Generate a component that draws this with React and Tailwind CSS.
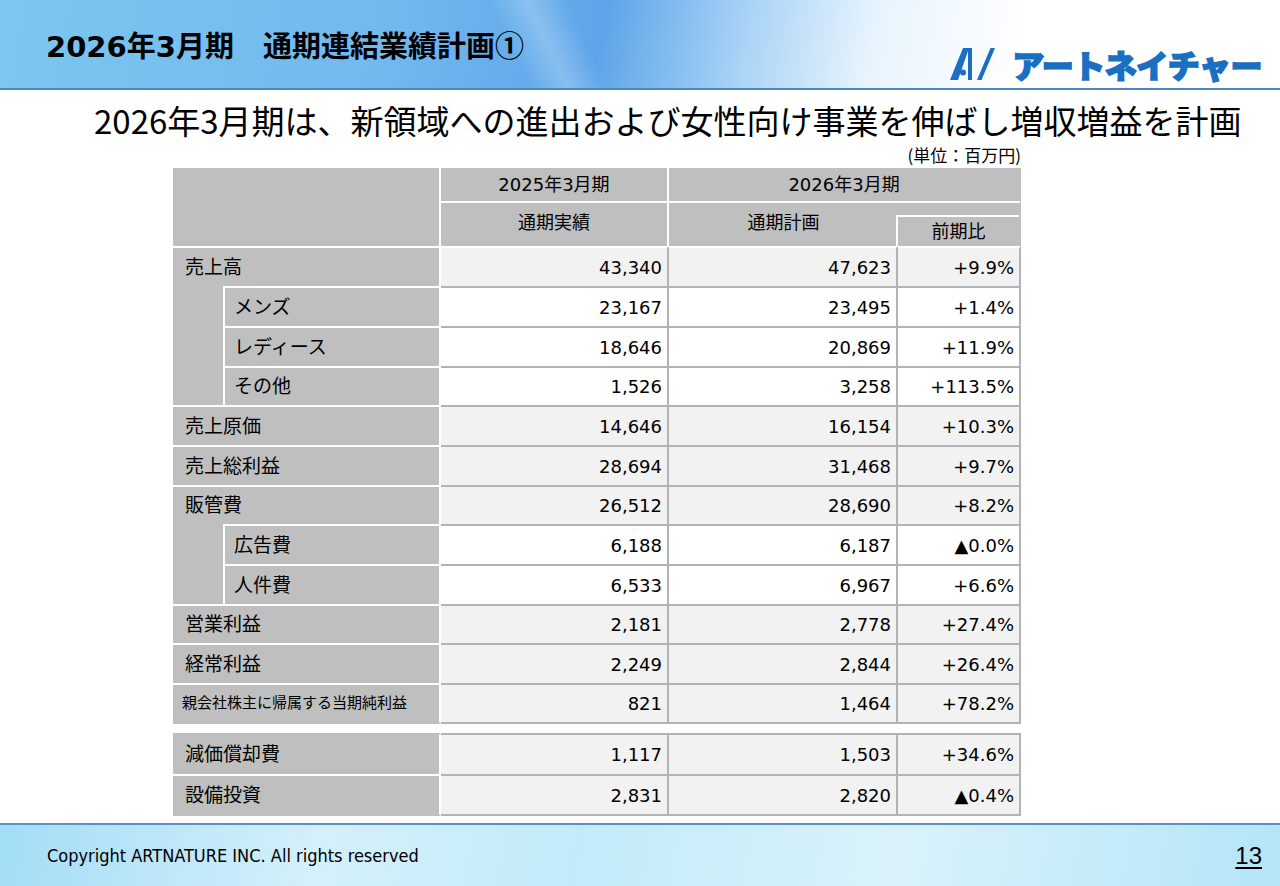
import React from "react";

const sans = { fontFamily: '"DejaVu Sans", "Noto Sans CJK JP", sans-serif' };

// 通期連結業績計画 rows
const rows = [
  { label: "売上高", a: "43,340", b: "47,623", c: "+9.9%", main: true, sub: 3, h: "h-[40px]" },
  { label: "メンズ", a: "23,167", b: "23,495", c: "+1.4%", h: "h-[40px]" },
  { label: "レディース", a: "18,646", b: "20,869", c: "+11.9%", h: "h-[40px]" },
  { label: "その他", a: "1,526", b: "3,258", c: "+113.5%", h: "h-[39px]" },
  { label: "売上原価", a: "14,646", b: "16,154", c: "+10.3%", main: true, h: "h-[40px]" },
  { label: "売上総利益", a: "28,694", b: "31,468", c: "+9.7%", main: true, h: "h-[40px]" },
  { label: "販管費", a: "26,512", b: "28,690", c: "+8.2%", main: true, sub: 2, h: "h-[39px]" },
  { label: "広告費", a: "6,188", b: "6,187", c: "▲0.0%", h: "h-[40px]" },
  { label: "人件費", a: "6,533", b: "6,967", c: "+6.6%", h: "h-[40px]" },
  { label: "営業利益", a: "2,181", b: "2,778", c: "+27.4%", main: true, h: "h-[39px]" },
  { label: "経常利益", a: "2,249", b: "2,844", c: "+26.4%", main: true, h: "h-[40px]" },
  { label: "親会社株主に帰属する当期純利益", a: "821", b: "1,464", c: "+78.2%", main: true, small: true, last: true, h: "h-[41px]" },
];

const extraRows = [
  { label: "減価償却費", a: "1,117", b: "1,503", c: "+34.6%", h: "h-[41px]" },
  { label: "設備投資", a: "2,831", b: "2,820", c: "▲0.4%", h: "h-[42px]", last: true },
];

const Cols = () => (
  <colgroup>
    <col className="w-[52px]" />
    <col className="w-[216px]" />
    <col className="w-[228px]" />
    <col className="w-[229px]" />
    <col className="w-[123px]" />
  </colgroup>
);

const NumCell = ({ value, bg, first, last }) => (
  <td
    className={`${bg} border-t-2 ${first ? "border-t-white" : "border-t-[#b3b3b3]"} ${
      last ? "border-b-2 border-b-[#b3b3b3]" : ""
    } border-r-2 border-r-[#b3b3b3] text-right pr-[3px] text-[18px] text-black p-0`}
  >
    <span className="pr-[2px]">{value}</span>
  </td>
);

const AV = () => (
  <svg width="46" height="32" viewBox="0 0 46 32" className="shrink-0">
    <polygon points="0,32 8,32 19,0 13,0" fill="#1b6fc3" />
    <rect x="18" y="0" width="4" height="32" fill="#1b6fc3" />
    <circle cx="13" cy="24.5" r="3" fill="#1b6fc3" />
    <polygon points="27,32 31.5,32 45,0 40.5,0" fill="#1b6fc3" />
  </svg>
);

export default function App() {
  return (
    <div className="w-[1280px] h-[886px] flex flex-col bg-white overflow-hidden" style={sans}>
      {/* Header */}
      <header className="relative h-[90px] shrink-0 border-b-2 border-[#4c87c6] bg-[linear-gradient(100deg,#7cc6ef_0%,#71b9ef_30%,#5ea5e9_47%,#a9d3f6_58%,#e8f4fd_68%,#ffffff_80%)] overflow-hidden">
        <div className="absolute inset-0 bg-[linear-gradient(65deg,transparent_40%,rgba(255,255,255,0.25)_43%,transparent_46%)]" />
        <div className="relative flex items-start justify-between h-full">
          <h1 className="pl-[46px] pt-[26px] text-[29px] leading-[36px] font-bold text-black whitespace-pre">
            2026年3月期　通期連結業績計画<span style={{ fontFamily: '"Noto Sans CJK JP", sans-serif' }}>①</span>
          </h1>
          <div className="flex items-center gap-[16px] pt-[48px] pr-[18px]">
            <AV />
            <span
              className="text-[32px] leading-[32px] font-black text-[#1b6fc3] tracking-[-0.5px] [-webkit-text-stroke:1.6px_#1b6fc3]"
              style={{ fontFamily: '"Noto Sans CJK JP", sans-serif' }}
            >
              アートネイチャー
            </span>
          </div>
        </div>
      </header>

      {/* Main */}
      <main className="flex-1">
        <p
          className="mt-[10px] pl-[94px] text-[33px] leading-[40px] text-black whitespace-nowrap"
          style={{ fontFamily: '"Noto Sans CJK JP", sans-serif' }}
        >
          2026年3月期は、新領域への進出および女性向け事業を伸ばし増収増益を計画
        </p>
        <div className="mt-[5px] w-[1021px] text-right text-[17px] leading-[20px] text-black" style={{ fontFamily: '"Noto Sans CJK JP", sans-serif' }}>
          (単位：百万円)
        </div>

        <table className="mt-[3px] ml-[173px] w-[848px] table-fixed border-separate border-spacing-0">
          <Cols />
          <thead>
            <tr className="h-[33px]">
              <th colSpan={2} rowSpan={2} className="bg-[#bfbfbf] border-r-2 border-white p-0" />
              <th className="bg-[#bfbfbf] border-r-2 border-white font-normal text-[18px] text-black p-0">
                2025年3月期
              </th>
              <th colSpan={2} className="bg-[#bfbfbf] border-r-2 border-[#bfbfbf] font-normal text-[18px] text-black p-0">
                2026年3月期
              </th>
            </tr>
            <tr className="h-[45px]">
              <th className="bg-[#bfbfbf] border-t-2 border-r-2 border-white font-normal text-[18px] text-black align-top pt-[6px] p-0">
                通期実績
              </th>
              <th className="bg-[#bfbfbf] border-t-2 border-white font-normal text-[18px] text-black align-top pt-[6px] p-0">
                通期計画
              </th>
              <th className="bg-[#bfbfbf] border-t-2 border-t-white border-r-2 border-r-[#bfbfbf] font-normal text-[18px] text-black align-bottom p-0">
                <div className="-ml-[2px] h-[31px] border-t-2 border-l-2 border-white flex items-center justify-center">
                  前期比
                </div>
              </th>
            </tr>
          </thead>
          <tbody>
            {rows.map((r, i) => {
              const bg = r.main ? "bg-[#f2f2f2]" : "bg-white";
              const labelCls = `bg-[#bfbfbf] border-t-2 border-r-2 border-white text-black ${
                r.small ? "text-[15px] pl-[9px]" : "text-[19px]"
              } whitespace-nowrap`;
              let spacer = null;
              if (!r.main && rows[i - 1] && rows[i - 1].main && rows[i - 1].sub) {
                spacer = (
                  <td rowSpan={rows[i - 1].sub} className="bg-[#bfbfbf] border-r-2 border-white p-0" />
                );
              }
              return (
                <tr key={r.label} className={r.h}>
                  {r.main ? (
                    <td colSpan={2} className={`${labelCls} ${r.small ? "" : "pl-[12px]"} ${r.last ? "border-b-2 border-b-[#bfbfbf]" : ""}`}>
                      {r.label}
                    </td>
                  ) : (
                    <>
                      {spacer}
                      <td className={`${labelCls} pl-[9px]`}>{r.label}</td>
                    </>
                  )}
                  <NumCell value={r.a} bg={bg} first={i === 0} last={r.last} />
                  <NumCell value={r.b} bg={bg} first={i === 0} last={r.last} />
                  <NumCell value={r.c} bg={bg} first={i === 0} last={r.last} />
                </tr>
              );
            })}
          </tbody>
        </table>

        <table className="mt-[9px] ml-[173px] w-[848px] table-fixed border-separate border-spacing-0">
          <Cols />
          <tbody>
            {extraRows.map((r, i) => (
              <tr key={r.label} className={r.h}>
                <td
                  colSpan={2}
                  className={`bg-[#bfbfbf] border-t-2 border-r-2 border-white text-black text-[19px] pl-[12px] ${
                    i === 0 ? "border-t-[#bfbfbf]" : ""
                  } ${r.last ? "border-b-2 border-b-[#bfbfbf]" : ""}`}
                >
                  {r.label}
                </td>
                <NumCell value={r.a} bg="bg-[#f2f2f2]" last={r.last} />
                <NumCell value={r.b} bg="bg-[#f2f2f2]" last={r.last} />
                <NumCell value={r.c} bg="bg-[#f2f2f2]" last={r.last} />
              </tr>
            ))}
          </tbody>
        </table>
      </main>

      {/* Footer */}
      <footer className="h-[63px] shrink-0 border-t-2 border-[#5b91c8] bg-[linear-gradient(100deg,#a3ddf6_0%,#d4f0fb_25%,#c2ebf9_45%,#d9f2fb_70%,#b3e5f7_100%)] flex items-center justify-between pl-[47px] pr-[18px]">
        <span className="text-[18px] text-black" style={{ fontFamily: '"DejaVu Sans Condensed", "DejaVu Sans", sans-serif' }}>
          Copyright ARTNATURE INC. All rights reserved
        </span>
        <span className="text-[24px] text-black underline underline-offset-[3px]" style={{ fontFamily: '"Liberation Sans", sans-serif' }}>
          13
        </span>
      </footer>
    </div>
  );
}
